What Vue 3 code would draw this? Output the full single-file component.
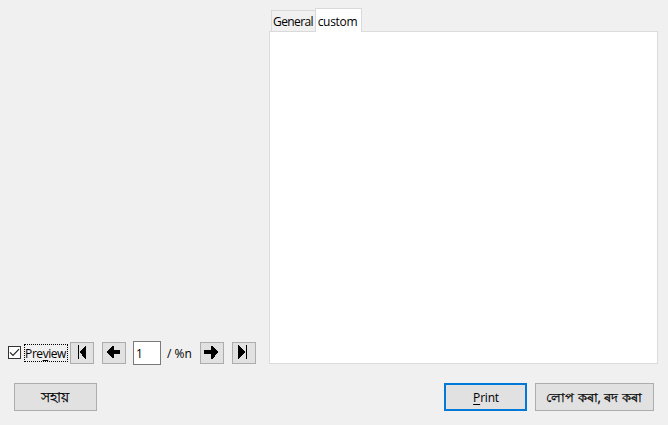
<script setup>
import { ref } from 'vue'

const tabs = ['General', 'custom']
const active = ref('custom')
const preview = ref(true)
const page = ref('1')
const back = [
  { name: 'First page', d: 'M8 3h1v14h-1z M10 10L15 4H16V17H15Z' },
  { name: 'Previous page', d: 'M5 10L10 4H12V8H18V12H12V16H10Z' },
]
const forward = [
  { name: 'Next page', d: 'M18 10L13 4H11V8H4V12H11V17H13Z' },
  { name: 'Last page', d: 'M14 3h1v14h-1z M13 10L7 3H6V17H7Z' },
]
</script>

<template>
  <div class="dialog">
    <main class="content">
      <section class="preview">
        <div class="controls">
          <label class="check" @click="preview = !preview">
            <span class="box">
              <svg v-if="preview" width="11" height="11" viewBox="0 0 11 11"><path d="M1 5.4L4 8.4L10 2.2" /></svg>
            </span>
            <span class="focus"><span class="text">Pre<u>v</u>iew</span></span>
          </label>
          <button v-for="b in back" :key="b.name" class="nav" :aria-label="b.name">
            <svg width="24" height="22" viewBox="0 0 24 22"><path :d="b.d" /></svg>
          </button>
          <input v-model="page" class="page" />
          <span class="total">/ %n</span>
          <button v-for="b in forward" :key="b.name" class="nav" :aria-label="b.name">
            <svg width="24" height="22" viewBox="0 0 24 22"><path :d="b.d" /></svg>
          </button>
        </div>
      </section>
      <section class="tabbed">
        <div class="tabs">
          <div v-for="t in tabs" :key="t" class="tab" :class="{ active: t === active }" @click="active = t"><span class="text">{{ t }}</span></div>
        </div>
        <div class="pane"></div>
      </section>
    </main>
    <footer class="actions">
      <button class="btn help">সহায়</button>
      <button class="btn primary"><span class="text"><u>P</u>rint</span></button>
      <button class="btn cancel">লোপ কৰা, ৰদ কৰা</button>
    </footer>
  </div>
</template>

<style>
body { margin: 0; background: #f0f0f0; }
</style>

<style scoped>
.dialog {
  box-sizing: border-box;
  width: 668px;
  height: 425px;
  padding: 8px 10px 14px 8px;
  display: flex;
  flex-direction: column;
  background: #f0f0f0;
  color: #000;
  font: 12px/16px "Open Sans", "Noto Sans", sans-serif;
  overflow: hidden;
}
.dialog * { box-sizing: border-box; }
.text { white-space: nowrap; }
u { text-decoration: underline; text-underline-offset: 2px; text-decoration-thickness: 1px; text-decoration-skip-ink: none; }
.content { display: flex; height: 357px; }
.preview { width: 261px; display: flex; align-items: flex-end; }
.controls { display: flex; align-items: center; height: 24px; }
.check { display: flex; align-items: center; width: 62px; }
.box { width: 13px; height: 13px; border: 1px solid #333; background: #fff; display: flex; margin: 0 3px 2px 0; flex: none; }
.box svg { fill: none; stroke: #222; stroke-width: 1.2; }
.focus { width: 44px; height: 18px; padding: 2px 1px 0 0; border: 1px dotted #000; display: flex; justify-content: center; align-items: center; flex: none; letter-spacing: -0.45px; }
.nav { width: 24px; height: 22px; padding: 0; border: 1px solid #adadad; background: #e1e1e1; display: flex; align-items: center; justify-content: center; margin-right: 8px; flex: none; }
.nav svg { flex: none; fill: #000; shape-rendering: crispEdges; }
.page { width: 28px; height: 24px; margin-left: -1px; padding: 1px 2px 0; border: 1px solid #7a7a7a; border-radius: 0; background: #fff; font: inherit; color: #000; outline: none; }
.total { width: 39px; padding: 2px 0 0 6px; white-space: nowrap; }
.tabbed { width: 389px; height: 356px; display: flex; flex-direction: column; }
.tabs { display: flex; align-items: flex-end; height: 24px; padding-left: 2px; margin-bottom: -1px; z-index: 1; }
.tab { height: 22px; width: 44px; border: 1px solid #d9d9d9; border-right: 0; display: flex; justify-content: center; align-items: center; padding: 2px 1px 0 0; letter-spacing: -0.6px; }
.tab.active { height: 24px; width: 47px; border-right: 1px solid #d9d9d9; border-bottom: 0; background: #fff; padding-top: 2px; padding-right: 2px; letter-spacing: -0.3px; }
.pane { flex: 1; border: 1px solid #dcdcdc; background: #fff; }
.actions { display: flex; margin-top: auto; padding: 0 4px 0 6px; height: 28px; }
.btn { width: 83px; height: 28px; padding: 2px 0 0; border: 1px solid #adadad; background: #e1e1e1; color: #000; font: inherit; white-space: nowrap; }
.help { font-size: 14px; padding: 0 2px 0 0; -webkit-text-stroke: 0.25px #000; }
.primary { margin-left: auto; padding-left: 1px; border: 2px solid #0078d7; letter-spacing: -0.2px; }
.cancel { width: 119px; margin-left: 8px; padding: 0 1px 0 0; font-size: 13.25px; -webkit-text-stroke: 0.25px #000; }
</style>
